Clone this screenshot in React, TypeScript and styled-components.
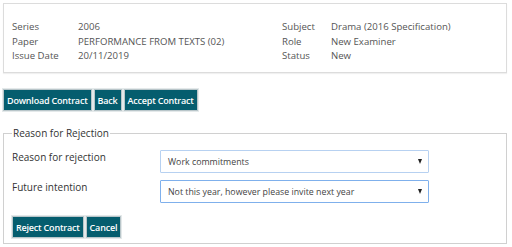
import React from "react";
import styled, { createGlobalStyle } from "styled-components";

const Global = createGlobalStyle`
  body { margin: 0; background: #fff; font-family: "Open Sans", "Liberation Sans", sans-serif; }
`;

const Page = styled.div`
  width: 504px;
  padding: 3px 0 0 3px;
`;

const InfoBox = styled.div`
  border: 1px solid #dcdcdc;
  box-shadow: 0 1px 1px rgba(0,0,0,0.06);
  height: 70px;
  box-sizing: border-box;
  padding: 16px 8px 0 8px;
  display: grid;
  grid-template-columns: 270px 1fr;
`;

const InfoTable = styled.div<{ labelW: number }>`
  display: grid;
  grid-template-columns: ${(p) => p.labelW}px 1fr;
  align-content: start;
  font-size: 9.6px;
  line-height: 14.5px;
  color: #555;
`;

const InfoCell = styled.div`
  white-space: nowrap;
`;

const ButtonRow = styled.div<{ m: string }>`
  display: flex;
  gap: 2px;
  margin: ${(p) => p.m};
`;

const Btn = styled.button`
  background: #055d6e;
  color: #fff;
  border: 1px solid #b9c6ca;
  outline: 1px solid #e4e9ea;
  font-family: "Open Sans", "Liberation Sans", sans-serif;
  font-weight: 600;
  font-size: 9px;
  letter-spacing: -0.2px;
  height: 22px;
  padding: 0 3px;
  cursor: pointer;
`;

const Fieldset = styled.fieldset`
  margin: 15px 0 0 0;
  border: 1px solid #d0d0d0;
  padding: 10px 8px 4px 8px;
  height: 118px;
  box-sizing: border-box;
`;

const Legend = styled.legend`
  font-size: 10px;
  color: #333;
  padding: 0 1px;
  margin-left: 0;
`;

const FormRow = styled.div<{ mb: number }>`
  display: flex;
  align-items: center;
  height: 23px;
  margin-bottom: ${(p) => p.mb}px;
`;

const Label = styled.div`
  width: 148px;
  font-size: 10px;
  color: #333;
  margin-top: -9px;
`;

const Select = styled.div<{ focused?: boolean }>`
  width: 269px;
  height: 23px;
  box-sizing: border-box;
  border: 1px solid ${(p) => (p.focused ? "#7fb0ec" : "#b7d1f1")};
  border-radius: 1px;
  display: flex;
  align-items: center;
  justify-content: space-between;
  padding: 0 6px 0 7px;
  font-size: 8.8px;
  color: #444;
`;

const Arrow = styled.span`
  width: 0;
  height: 0;
  border-left: 2.5px solid transparent;
  border-right: 2.5px solid transparent;
  border-top: 5px solid #222;
`;

export default function App() {
  return (
    <Page>
      <Global />
      <InfoBox>
        <InfoTable labelW={66}>
          <InfoCell>Series</InfoCell><InfoCell>2006</InfoCell>
          <InfoCell>Paper</InfoCell><InfoCell>PERFORMANCE FROM TEXTS (02)</InfoCell>
          <InfoCell>Issue Date</InfoCell><InfoCell>20/11/2019</InfoCell>
        </InfoTable>
        <InfoTable labelW={49}>
          <InfoCell>Subject</InfoCell><InfoCell>Drama (2016 Specification)</InfoCell>
          <InfoCell>Role</InfoCell><InfoCell>New Examiner</InfoCell>
          <InfoCell>Status</InfoCell><InfoCell>New</InfoCell>
        </InfoTable>
      </InfoBox>
      <ButtonRow m="16px 0 0 0">
        <Btn>Download Contract</Btn>
        <Btn>Back</Btn>
        <Btn>Accept Contract</Btn>
      </ButtonRow>
      <Fieldset>
        <Legend>Reason for Rejection</Legend>
        <FormRow mb={7}>
          <Label>Reason for rejection</Label>
          <Select>Work commitments<Arrow /></Select>
        </FormRow>
        <FormRow mb={13}>
          <Label>Future intention</Label>
          <Select focused>Not this year, however please invite next year<Arrow /></Select>
        </FormRow>
        <ButtonRow m="0">
          <Btn>Reject Contract</Btn>
          <Btn>Cancel</Btn>
        </ButtonRow>
      </Fieldset>
    </Page>
  );
}
